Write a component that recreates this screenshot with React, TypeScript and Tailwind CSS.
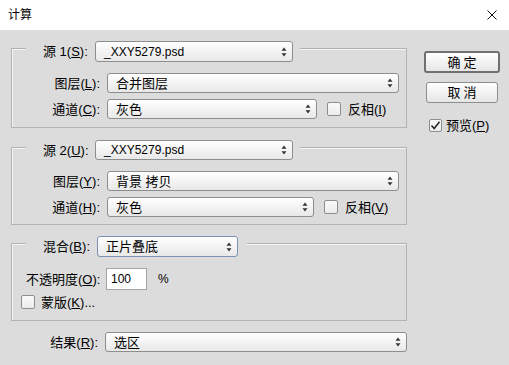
import React from "react";

const FONT = "font-['Liberation_Sans','Noto_Sans_CJK_SC',sans-serif]";

function Arrows() {
  return (
    <svg width="6" height="10" viewBox="0 0 6 10" className="shrink-0">
      <path d="M3 0.5 L5.5 3.8 L0.5 3.8 Z" fill="#333" />
      <path d="M0.5 6.2 L5.5 6.2 L3 9.5 Z" fill="#333" />
    </svg>
  );
}

function Select({
  text,
  w,
  h = 20,
  blue = false,
  latin = false,
}: {
  text: string;
  w: string;
  h?: number;
  blue?: boolean;
  latin?: boolean;
}) {
  return (
    <div
      className={`${w} ${h === 21 ? "h-[21px]" : "h-[20px]"} flex items-center justify-between rounded-[3px] border ${
        blue ? "border-[#7d93b3]" : "border-[#8e8e8e]"
      } bg-gradient-to-b from-white to-[#e8e8e8] pl-[8px] pr-[5px] ${latin ? "text-[12px]" : "text-[13px]"} leading-none text-black`}
    >
      <span>{text}</span>
      <Arrows />
    </div>
  );
}

function Hot({ k }: { k: string }) {
  return (
    <>
      (<span className="underline underline-offset-1">{k}</span>)
    </>
  );
}

function Check({ checked = false, size = "w-[14px] h-[14px]" }: { checked?: boolean; size?: string }) {
  return (
    <div
      className={`${size} shrink-0 rounded-[2px] border border-[#8e8e8e] bg-gradient-to-b from-[#fafafa] to-[#ececec] flex items-center justify-center`}
    >
      {checked && (
        <svg width="11" height="11" viewBox="0 0 11 11">
          <path d="M1.5 5.5 L4.2 8.5 L9.5 1.8" fill="none" stroke="#222" strokeWidth="1.5" />
        </svg>
      )}
    </div>
  );
}

function Group({ header, children, pr = "pr-[7px]" }: { header: React.ReactNode; children: React.ReactNode; pr?: string }) {
  return (
    <div className="border border-[#b2b2b2] shadow-[inset_1px_1px_0_#f4f4f4]">
      <div className={`-mt-[8px] ml-[14px] flex w-fit items-center bg-[#dcdcdc] pl-[17px] ${pr}`}>{header}</div>
      {children}
    </div>
  );
}

function Row({ label, children, mt }: { label: React.ReactNode; children: React.ReactNode; mt: string }) {
  return (
    <div className={`${mt} flex items-center`}>
      <div className="w-[88px] text-right text-[13px] leading-none">{label}</div>
      <div className="ml-[7px] flex items-center">{children}</div>
    </div>
  );
}

export default function App() {
  return (
    <div className={`${FONT} w-[509px] h-[365px] overflow-hidden bg-[#dcdcdc] text-black`}>
      <div className="flex h-[30px] items-center justify-between bg-white pl-[8px] pr-[12px]">
        <span className="text-[12px] leading-none">计算</span>
        <svg width="10" height="10" viewBox="0 0 10 10">
          <path d="M0.5 0.5 L9.5 9.5 M9.5 0.5 L0.5 9.5" stroke="#111" strokeWidth="1" />
        </svg>
      </div>
      <div className="flex">
        <div className="ml-[11px] w-[396px] pt-[18px]">
          <Group
            header={
              <>
                <span className="w-[46px] whitespace-nowrap text-[13px] leading-none">
                  源 1<Hot k="S" />:
                </span>
                <div className="ml-[6px]">
                  <Select text="_XXY5279.psd" w="w-[198px]" h={21} latin />
                </div>
              </>
            }
          >
            <Row mt="mt-[11px]" label={<>图层<Hot k="L" />:</>}>
              <Select text="合并图层" w="w-[292px]" />
            </Row>
            <Row mt="mt-[6px]" label={<>通道<Hot k="C" />:</>}>
              <Select text="灰色" w="w-[210px]" />
              <div className="ml-[10px]">
                <Check />
              </div>
              <span className="ml-[7px] text-[13px] leading-none">
                反相<Hot k="I" />
              </span>
            </Row>
            <div className="h-[8px]" />
          </Group>

          <div className="mt-[19px]">
            <Group
              header={
                <>
                  <span className="w-[46px] whitespace-nowrap text-[13px] leading-none">
                    源 2<Hot k="U" />:
                  </span>
                  <div className="ml-[6px]">
                    <Select text="_XXY5279.psd" w="w-[198px]" h={20} latin />
                  </div>
                </>
              }
            >
              <Row mt="mt-[11px]" label={<>图层<Hot k="Y" />:</>}>
                <Select text="背景 拷贝" w="w-[292px]" />
              </Row>
              <Row mt="mt-[6px]" label={<>通道<Hot k="H" />:</>}>
                <Select text="灰色" w="w-[207px]" />
                <div className="ml-[10px]">
                  <Check />
                </div>
                <span className="ml-[7px] text-[13px] leading-none">
                  反相<Hot k="V" />
                </span>
              </Row>
              <div className="h-[7px]" />
            </Group>
          </div>

          <div className="mt-[18px]">
            <Group
              pr="pr-[9px]"
              header={
                <>
                  <span className="w-[48px] whitespace-nowrap text-[13px] leading-none">
                    混合<Hot k="B" />:
                  </span>
                  <div className="ml-[6px]">
                    <Select text="正片叠底" w="w-[141px]" h={21} blue />
                  </div>
                </>
              }
            >
              <div className="mt-[11px] flex items-center pl-[14px]">
                <span className="w-[80px] whitespace-nowrap text-[13px] leading-none">
                  不透明度<Hot k="O" />:
                </span>
                <div className="flex h-[22px] w-[41px] items-center border border-[#a5a5a5] bg-white pl-[4px] text-[12px] leading-none">
                  100
                </div>
                <span className="ml-[11px] text-[12px] leading-none">%</span>
              </div>
              <div className="mt-[5px] flex items-center pl-[9px]">
                <Check />
                <span className="ml-[6px] text-[13px] leading-none">
                  蒙版<Hot k="K" />...
                </span>
              </div>
              <div className="h-[11px]" />
            </Group>
          </div>

          <div className="mt-[11px] flex items-center">
            <div className="w-[89px] text-right text-[13px] leading-none">
              结果<Hot k="R" />:
            </div>
            <div className="ml-[7px]">
              <Select text="选区" w="w-[302px]" />
            </div>
          </div>
        </div>

        <div className="ml-[17px] flex w-[76px] flex-col items-center pt-[21px]">
          <button className="flex h-[22px] w-[76px] items-center justify-center rounded-[3px] border-2 border-[#707070] bg-gradient-to-b from-white to-[#e6e6e6] pl-[3px] text-[13px] tracking-[3px] leading-none">
            确定
          </button>
          <button className="mt-[9px] flex h-[21px] w-[72px] items-center justify-center rounded-[3px] border border-[#8e8e8e] bg-gradient-to-b from-white to-[#e6e6e6] pl-[3px] text-[13px] tracking-[3px] leading-none">
            取消
          </button>
          <div className="mt-[16px] flex w-full items-center pl-[5px]">
            <Check checked size="w-[13px] h-[13px]" />
            <span className="ml-[4px] text-[13px] leading-none">
              预览<Hot k="P" />
            </span>
          </div>
        </div>
      </div>
    </div>
  );
}
